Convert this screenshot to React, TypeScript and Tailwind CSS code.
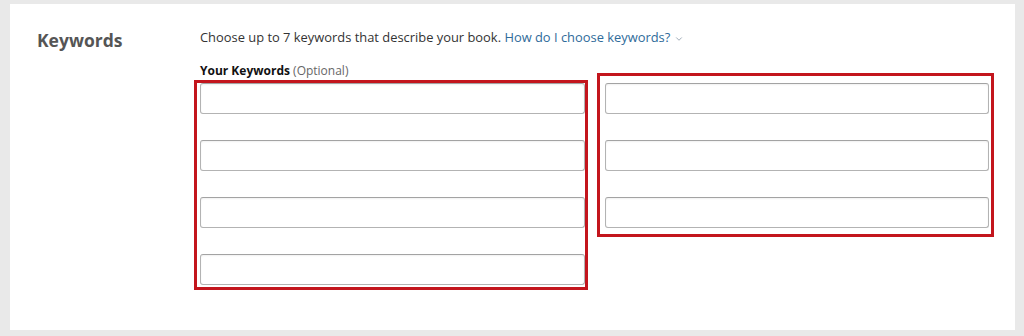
import { ChevronDown } from "lucide-react";

const KeywordInput = () => (
  <input
    type="text"
    className="h-[31px] w-full rounded-[3px] border border-[#b3b3b3] border-t-[#a3a3a3] bg-white px-2 text-[13px] shadow-[inset_0_1px_2px_rgba(0,0,0,0.06)] outline-none"
  />
);

const App = () => {
  const left = [0, 1, 2, 3];
  const right = [4, 5, 6];

  return (
    <div className="h-[336px] bg-[#e9e9e9] pl-[10px] pr-[9px] pt-1 font-['Open_Sans',sans-serif]">
      <div className="relative flex h-[326px] bg-white pl-[27px] pt-[22px]">
        <h2 className="w-[163px] shrink-0 pt-[2px] text-[17.5px] font-bold leading-[24px] text-[#555555]">
          Keywords
        </h2>

        <div className="w-[789px]">
          <p className="text-[12.9px] leading-[22px] text-[#333333]">
            Choose up to 7 keywords that describe your book.{" "}
            <span className="text-[#2f6b9a]">How do I choose keywords?</span>
            <ChevronDown className="ml-[4px] inline-block h-[10px] w-[10px] align-middle text-[#8d9aa8]" strokeWidth={2} />
          </p>

          <p className="mt-[15px] text-[12px] leading-4 text-[#111111]">
            <span className="font-bold">Your Keywords</span>{" "}
            <span className="text-[#666666]">(Optional)</span>
          </p>

          <div className="mt-[4px] grid grid-cols-2 gap-x-[20px]">
            <div className="flex flex-col gap-[26px]">
              {left.map((k) => (
                <KeywordInput key={k} />
              ))}
            </div>
            <div className="flex flex-col gap-[26px]">
              {right.map((k) => (
                <KeywordInput key={k} />
              ))}
            </div>
          </div>
        </div>

        {/* red annotation boxes drawn over the form */}
        <div className="pointer-events-none absolute left-[184px] top-[76px] h-[210px] w-[394px] border-[3px] border-[#c3151d]" />
        <div className="pointer-events-none absolute left-[587px] top-[69px] h-[164px] w-[397px] border-[3px] border-[#c3151d]" />
      </div>
    </div>
  );
};

export default App;
